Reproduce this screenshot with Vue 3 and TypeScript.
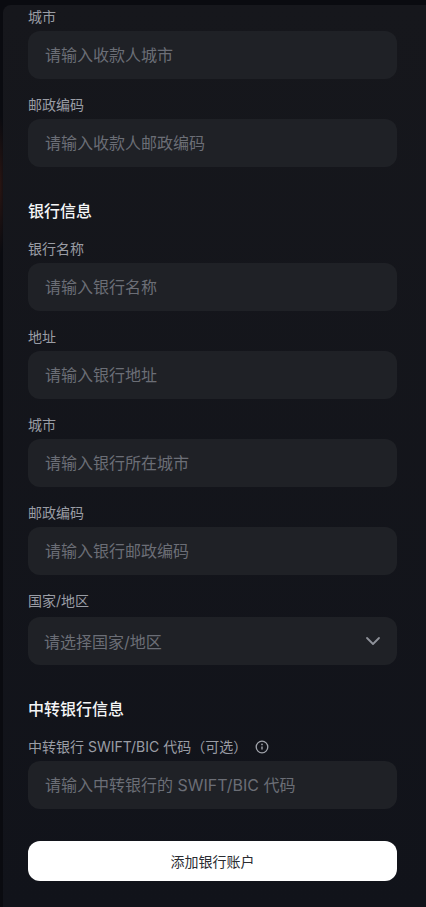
<script setup lang="ts">
interface Field {
  label: string
  placeholder: string
}
const recipient: Field[] = [
  { label: '城市', placeholder: '请输入收款人城市' },
  { label: '邮政编码', placeholder: '请输入收款人邮政编码' },
]
const bank: Field[] = [
  { label: '银行名称', placeholder: '请输入银行名称' },
  { label: '地址', placeholder: '请输入银行地址' },
  { label: '城市', placeholder: '请输入银行所在城市' },
  { label: '邮政编码', placeholder: '请输入银行邮政编码' },
]
</script>

<template>
  <div class="page">
    <div class="panel">
      <section class="section">
        <div v-for="f in recipient" :key="f.label" class="field">
          <label class="label">{{ f.label }}</label>
          <input class="input" :placeholder="f.placeholder" />
        </div>
      </section>

      <section class="section">
        <h3 class="heading">银行信息</h3>
        <div v-for="f in bank" :key="f.label" class="field">
          <label class="label">{{ f.label }}</label>
          <input class="input" :placeholder="f.placeholder" />
        </div>
        <div class="field select-field">
          <label class="label">国家/地区</label>
          <div class="select">
            <span>请选择国家/地区</span>
            <svg class="chevron" width="16" height="16" viewBox="0 0 16 16" fill="none">
              <path d="M2 5l6 6 6-6" stroke="currentColor" stroke-width="1.8" stroke-linecap="round" stroke-linejoin="round" />
            </svg>
          </div>
        </div>
      </section>

      <section class="section">
        <h3 class="heading">中转银行信息</h3>
        <div class="field">
          <label class="label with-icon">
            中转银行 SWIFT/BIC 代码（可选）
            <svg class="info" width="14" height="14" viewBox="0 0 14 14" fill="none">
              <circle cx="7" cy="7" r="5.8" stroke="currentColor" stroke-width="1.3" />
              <path d="M7 6.4v3.2" stroke="currentColor" stroke-width="1.4" />
              <circle cx="7" cy="4.4" r="0.85" fill="currentColor" />
            </svg>
          </label>
          <input class="input" placeholder="请输入中转银行的 SWIFT/BIC 代码" />
        </div>
      </section>

      <button class="submit" type="button">添加银行账户</button>
    </div>
  </div>
</template>

<style>
html,
body {
  margin: 0;
  background: #0a0b10;
}
</style>

<style scoped>
.page {
  height: 907px;
  overflow: hidden;
  box-sizing: border-box;
  padding: 5px 0 0 3px;
  background: radial-gradient(ellipse 6px 70px at 0 185px, #2a1512, #0a0b10);
  font-family: Inter, "Liberation Sans", "Noto Sans CJK SC", sans-serif;
}
.panel {
  box-sizing: border-box;
  height: 902px;
  padding: 2px 29px 0 25px;
  background: linear-gradient(#16171c, #11131a);
  border-radius: 8px 0 0 0;
  display: flex;
  flex-direction: column;
}
.section {
  display: flex;
  flex-direction: column;
  gap: 16px;
}
.section + .section {
  margin-top: 32px;
}
.heading {
  margin: 0;
  height: 24px;
  line-height: 24px;
  font-size: 16px;
  font-weight: 500;
  color: #f4f5f6;
}
.field {
  display: flex;
  flex-direction: column;
  gap: 4px;
}
.select-field {
  gap: 6px;
}
.label {
  height: 20px;
  line-height: 20px;
  font-size: 14px;
  color: #9a9da5;
}
.with-icon {
  display: flex;
  align-items: center;
  gap: 8px;
}
.info {
  color: #a0a3ab;
}
.input,
.select {
  box-sizing: border-box;
  width: 100%;
  height: 48px;
  border: 0;
  outline: 0;
  border-radius: 12px;
  background: #1f2126;
  padding: 0 17px;
  font-family: inherit;
  font-size: 16px;
  color: #f4f5f6;
}
.input::placeholder {
  color: #6b6e76;
  opacity: 1;
}
.select {
  display: flex;
  align-items: center;
  justify-content: space-between;
  padding: 0 16px;
  color: #6b6e76;
}
.chevron {
  color: #8f929a;
}
.submit {
  margin-top: 32px;
  height: 40px;
  border: 0;
  border-radius: 12px;
  background: #ffffff;
  color: #2a2c31;
  font-family: inherit;
  font-size: 14px;
}
</style>
